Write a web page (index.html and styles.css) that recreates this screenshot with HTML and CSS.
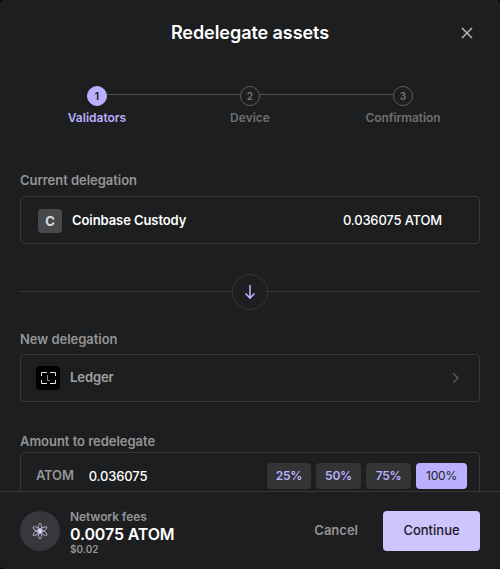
FILE: index.html
```html
<!DOCTYPE html>
<html lang="en">
<head>
<meta charset="utf-8">
<title>Redelegate assets</title>
<link rel="stylesheet" href="styles.css">
</head>
<body>
<main class="modal">
  <header class="header">
    <h1 class="title">Redelegate assets</h1>
    <button class="close" aria-label="Close">
      <svg width="12" height="12" viewBox="0 0 12 12"><path d="M1 1L11 11M11 1L1 11" fill="none" stroke="#b4b5b5" stroke-width="1.5"/></svg>
    </button>
  </header>
  <div class="content">
    <div class="stepper">
      <div class="step active"><span class="dot">1</span><span class="step-label">Validators</span></div>
      <div class="rail"></div>
      <div class="step"><span class="dot">2</span><span class="step-label">Device</span></div>
      <div class="rail"></div>
      <div class="step"><span class="dot">3</span><span class="step-label tight">Confirmation</span></div>
    </div>
    <div class="label">Current delegation</div>
    <div class="card current">
      <span class="avatar">C</span>
      <span class="name">Coinbase Custody</span>
      <span class="amount">0.036075 ATOM</span>
    </div>
    <div class="divider">
      <span class="line"></span>
      <span class="arrow"><svg width="12" height="16" viewBox="0 0 12 16"><path d="M6 1V14M1.5 9.5L6 14L10.5 9.5" fill="none" stroke="#bbb0ff" stroke-width="1.6"/></svg></span>
      <span class="line"></span>
    </div>
    <div class="label">New delegation</div>
    <div class="card new">
      <span class="ledger"><svg width="24" height="24" viewBox="0 0 24 24"><path d="M5.5 10V6.5H11M14 6.5H19.5V10M5.5 14V17.5H11M14 17.5H19.5V14" fill="none" stroke="#e8e8e8"/><path d="M11.5 9V14.5H14" fill="none" stroke="#8c8c8c"/></svg></span>
      <span class="name muted">Ledger</span>
      <svg class="chevron" width="8" height="12" viewBox="0 0 8 12"><path d="M1.2 1.3L6 6L1.2 10.7" fill="none" stroke="#58595a" stroke-width="1.5"/></svg>
    </div>
    <div class="label">Amount to redelegate</div>
    <div class="card field">
      <span class="unit">ATOM</span>
      <span class="value">0.036075</span>
      <div class="ratios">
        <button class="ratio">25%</button>
        <button class="ratio">50%</button>
        <button class="ratio">75%</button>
        <button class="ratio selected">100%</button>
      </div>
    </div>
  </div>
  <footer class="footer">
    <span class="coin"><svg width="16" height="18" viewBox="-8 -9 16 18"><g fill="none" stroke="#b9b8d4" stroke-width=".9"><ellipse rx="2" ry="7.8"/><ellipse rx="2" ry="7.8" transform="rotate(60)"/><ellipse rx="2" ry="7.8" transform="rotate(120)"/></g><circle r="2" fill="#dcdaf2"/></svg></span>
    <div class="fees">
      <span class="fees-label">Network fees</span>
      <span class="fees-value">0.0075 ATOM</span>
      <span class="fees-fiat">$0.02</span>
    </div>
    <button class="cancel">Cancel</button>
    <button class="continue">Continue</button>
  </footer>
</main>
</body>
</html>
```

FILE: styles.css
```css
* { box-sizing: border-box; }
body { margin: 0; background: #000; font-family: Inter, "Liberation Sans", sans-serif; font-size: 13px; font-weight: 600; color: #fff; }
button { border: 0; padding: 0; margin: 0; background: none; font: inherit; color: inherit; }
svg { display: block; }
.modal { height: 569px; display: flex; flex-direction: column; overflow: hidden; border-radius: 4px; background: #1d1e20; }
.header { height: 66px; flex: none; display: grid; grid-template-columns: 40px 1fr 40px; align-items: center; padding: 0 13px; }
.title { grid-column: 2; margin: 0; font-size: 18px; font-weight: 600; line-height: 24px; letter-spacing: -0.06px; text-align: center; }
.close { display: flex; justify-content: center; }
.content { flex: 1; min-height: 0; overflow: hidden; padding: 20px 20px 0; }
.stepper { display: flex; height: 40px; padding: 0 67px; }
.step { width: 20px; display: flex; flex-direction: column; align-items: center; color: #6e6f70; white-space: nowrap; }
.dot { width: 20px; height: 20px; flex: none; border: 1px solid #5c5d5e; border-radius: 50%; font-size: 10px; font-weight: 700; line-height: 19px; text-align: center; }
.step-label { margin-top: 4px; font-size: 12px; line-height: 16px; }
.tight { letter-spacing: -0.1px; }
.active { color: #bbb0ff; }
.active .dot { border-color: #bbb0ff; background: #bbb0ff; color: #1d1e20; }
.rail { flex: 1; height: 1px; margin-top: 8px; background: #515253; }
.label { height: 18px; line-height: 18px; letter-spacing: -0.03px; color: #949595; }
.stepper + .label { margin-top: 45px; }
.card { height: 48px; display: flex; align-items: center; border: 1px solid #37383a; border-radius: 4px; }
.current { margin-top: 7px; padding: 0 37px 0 17px; }
.avatar { width: 24px; height: 24px; margin-top: 2px; border-radius: 4px; background: #48494b; color: #dcdcdc; font-size: 13px; font-weight: 700; line-height: 24px; text-align: center; }
.name { margin-left: 10px; letter-spacing: -0.08px; }
.muted { margin-top: -2px; color: #a2a3a3; }
.amount { margin-left: auto; font-weight: 500; letter-spacing: -0.17px; }
.divider { height: 36px; margin-top: 30px; display: flex; }
.line { flex: 1; height: 1px; margin-top: 17px; background: #37383a; }
.arrow { width: 36px; height: 36px; border: 1px solid #37383a; border-radius: 50%; display: flex; align-items: center; justify-content: center; }
.divider + .label { margin-top: 20px; }
.new { margin-top: 6px; padding: 0 19px 0 15px; }
.ledger { width: 24px; height: 24px; border-radius: 4px; background: #000; }
.chevron { margin-left: auto; }
.new + .label { margin-top: 30px; }
.field { margin-top: 2px; padding: 0 12px 0 15px; }
.unit { margin-top: -2px; color: #949595; font-weight: 600; letter-spacing: -0.2px; }
.value { margin-left: 15px; font-weight: 500; letter-spacing: -0.15px; }
.ratios { display: flex; gap: 5px; margin-left: auto; }
.ratio { width: 45px; height: 26px; border-radius: 4px; background: #333436; color: #bbb0ff; font-size: 12px; font-weight: 600; letter-spacing: -0.25px; line-height: 26px; text-align: center; }
.ratio:first-child { width: 44px; }
.selected { width: 51px; background: #bbb0ff; color: #1d1e20; font-weight: 400; letter-spacing: -0.2px; }
.footer { height: 78px; flex: none; display: flex; align-items: center; padding: 1px 20px 0; border-top: 1px solid #37383a; }
.coin { width: 40px; height: 40px; border-radius: 50%; background: #37383c; display: flex; align-items: center; justify-content: center; }
.fees { display: flex; flex-direction: column; margin-left: 10px; }
.fees-label { color: #949595; font-size: 12px; line-height: 15px; letter-spacing: -0.1px; }
.fees-value { padding-top: 1px; font-size: 16px; line-height: 19px; letter-spacing: -0.15px; }
.fees-fiat { color: #949595; font-size: 10px; line-height: 10px; }
.cancel { margin-left: auto; color: #949595; margin-top: -2px; }
.continue { width: 97px; height: 40px; margin-left: 25px; padding-bottom: 2px; border-radius: 4px; background: #cec5ff; color: #17181a; font-weight: 500; }
```
